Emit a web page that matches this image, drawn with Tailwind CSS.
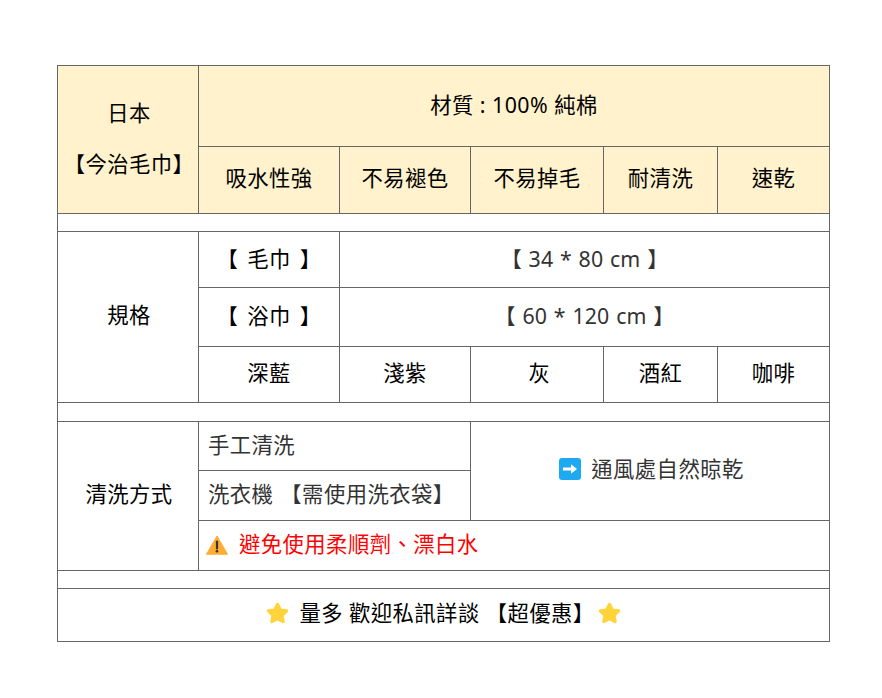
<!DOCTYPE html>
<html lang="zh-Hant">
<head>
    <meta charset="UTF-8">
    <title>今治毛巾</title>
    <script src="https://cdn.jsdelivr.net/npm/@tailwindcss/browser@4"></script>
</head>
<body class="bg-white font-['Noto_Sans','Noto_Sans_CJK_TC',sans-serif] text-[21.33px] leading-[32px] tracking-[0.45px] text-[#333]">
    <div class="pt-[65px] pl-[57px]">
        <table class="w-[772px] table-fixed border-collapse text-center [&_td]:border [&_td]:border-[#666] [&_td]:p-0">
            <colgroup>
                <col class="w-[141px]"><col class="w-[141px]"><col class="w-[131px]"><col class="w-[133px]"><col class="w-[114px]"><col class="w-[112px]">
            </colgroup>
            <tbody>
                <tr class="h-[81px] bg-[#fff2cc] text-black">
                    <td rowspan="2" class="!pb-[2px] !pl-[2px]"><p class="pb-[19px]">日本</p><p>【今治毛巾】</p></td>
                    <td colspan="5" class="!pb-[2px]">材質 : 100% 純棉</td>
                </tr>
                <tr class="h-[67px] bg-[#fff2cc] text-black">
                    <td class="!pb-[4px]">吸水性強</td><td class="!pb-[4px]">不易褪色</td><td class="!pb-[4px]">不易掉毛</td><td class="!pb-[4px]">耐清洗</td><td class="!pb-[4px]">速乾</td>
                </tr>
                <tr class="h-[18px]"><td colspan="6"></td></tr>
                <tr class="h-[56px] text-black">
                    <td rowspan="3" class="!pb-[4px] !pl-[2px]">規格</td>
                    <td class="!pb-[2px] [word-spacing:3px]">【 毛巾 】</td>
                    <td colspan="4" class="!pb-[2px] text-[#333] tracking-[0.15px] [word-spacing:1px]">【 34 * 80 cm 】</td>
                </tr>
                <tr class="h-[59px] text-black">
                    <td class="!pb-[2px] [word-spacing:3px]">【 浴巾 】</td>
                    <td colspan="4" class="!pb-[2px] text-[#333] tracking-[0.15px] [word-spacing:1px]">【 60 * 120 cm 】</td>
                </tr>
                <tr class="h-[56px] text-black">
                    <td class="!pb-[4px]">深藍</td><td class="!pb-[4px]">淺紫</td><td class="!pb-[4px] !pl-[5px]">灰</td><td class="!pb-[4px]">酒紅</td><td class="!pb-[4px]">咖啡</td>
                </tr>
                <tr class="h-[19px]"><td colspan="6"></td></tr>
                <tr class="h-[49px]">
                    <td rowspan="3" class="!pb-[4px] !pl-[2px] text-black">清洗方式</td>
                    <td colspan="2" class="text-left !pl-[9px] !pb-[2px]">手工清洗</td>
                    <td colspan="3" rowspan="2" class="!pb-[4px] !pl-[3px]">
                        <div class="flex items-center justify-center gap-[10px]">
                            <svg class="w-[22px] h-[22px]" viewBox="0 0 22 22"><rect width="22" height="22" rx="3" fill="#1eaaf1"/><path d="M4 9.6h8V6.2l6 4.8-6 4.8v-3.4H4z" fill="#fff"/></svg>
                            <span>通風處自然晾乾</span>
                        </div>
                    </td>
                </tr>
                <tr class="h-[50px]">
                    <td colspan="2" class="text-left !pl-[9px] !pb-[4px] [word-spacing:1px]">洗衣機 【需使用洗衣袋】</td>
                </tr>
                <tr class="h-[50px]">
                    <td colspan="5" class="text-left !pl-[7px] !pb-[4px]">
                        <div class="flex items-center gap-[11px] text-[#ff0000]">
                            <svg class="w-[22px] h-[20px] mt-[3px]" viewBox="0 0 22 20"><path d="M11 1 21.5 19.2H.5z" fill="#ffac33" stroke="#ffac33" stroke-linejoin="round"/><path d="M11 6.5v7" stroke="#31373d" stroke-width="2.2" stroke-linecap="round"/><circle cx="11" cy="16.3" r="1.3" fill="#31373d"/></svg>
                            <span>避免使用柔順劑、漂白水</span>
                        </div>
                    </td>
                </tr>
                <tr class="h-[18px]"><td colspan="6"></td></tr>
                <tr class="h-[53px] text-black">
                    <td colspan="6" class="!pb-[4px]">
                        <div class="flex items-center justify-center gap-[10px]">
                            <svg class="w-[23px] h-[23px]" viewBox="0 0 22 22"><path d="M11 2.2 13.7 7.6 19.8 8.5 15.4 12.8 16.4 18.8 11 16 5.6 18.8 6.6 12.8 2.2 8.5 8.3 7.6z" fill="#ffd43b" stroke="#ffd43b" stroke-width="3" stroke-linejoin="round"/></svg>
                            <span>量多 歡迎私訊詳談 【超優惠】</span>
                            <svg class="w-[23px] h-[23px] -ml-[7px]" viewBox="0 0 22 22"><path d="M11 2.2 13.7 7.6 19.8 8.5 15.4 12.8 16.4 18.8 11 16 5.6 18.8 6.6 12.8 2.2 8.5 8.3 7.6z" fill="#ffd43b" stroke="#ffd43b" stroke-width="3" stroke-linejoin="round"/></svg>
                        </div>
                    </td>
                </tr>
            </tbody>
        </table>
    </div>
</body>
</html>
